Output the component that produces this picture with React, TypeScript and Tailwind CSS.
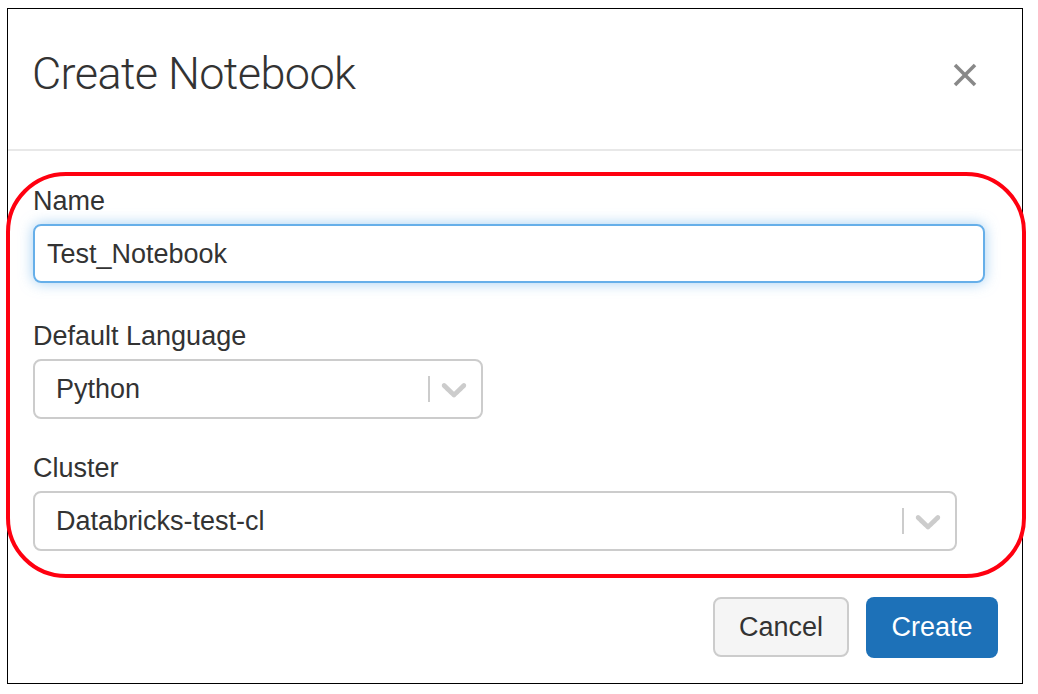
import React from 'react';

function Chevron() {
  return (
    <svg viewBox="0 0 20 20" className="w-[42px] h-[42px]" fill="#cccccc">
      <path d="M4.516 7.548c0.436-0.446 1.043-0.481 1.576 0l3.908 3.747 3.908-3.747c0.533-0.481 1.141-0.446 1.574 0 0.436 0.445 0.408 1.197 0 1.615-0.406 0.418-4.695 4.502-4.695 4.502-0.217 0.223-0.502 0.335-0.787 0.335s-0.57-0.112-0.789-0.335c0 0-4.287-4.084-4.695-4.502s-0.436-1.17 0-1.615z" />
    </svg>
  );
}

function SelectBox({ value, width }: { value: string; width: string }) {
  return (
    <div
      className={`${width} h-[60px] flex items-center border-2 border-[#cccccc] rounded-[8px] bg-white pl-[21px] pr-[6px]`}
    >
      <span className="flex-1 text-[27px] leading-[30px] text-[#333333]">{value}</span>
      <span className="w-[2px] h-[26px] bg-[#cccccc] mr-[3px]" />
      <Chevron />
    </div>
  );
}

export default function App() {
  return (
    <div
      className="relative w-[1038px] h-[694px] bg-white pt-[8px] pl-[7px]"
      style={{ fontFamily: '"Liberation Sans", Arial, sans-serif' }}
    >
      {/* Modal */}
      <div className="w-[1016px] h-[676px] border border-black flex flex-col bg-white">
        {/* Header */}
        <div className="h-[142px] flex justify-between items-start border-b-2 border-[#e8e8e8] pl-[24px] pr-[45px] pt-[37px]">
          <h1
            className="text-[45px] leading-[56px] font-light text-[#333333] tracking-[-0.6px]"
            style={{ fontFamily: 'Roboto, "Liberation Sans", sans-serif' }}
          >
            Create Notebook
          </h1>
          <svg viewBox="0 0 24 24" className="w-[24px] h-[24px] mt-[17px]" stroke="#888888" strokeWidth="3.5">
            <line x1="2" y1="2" x2="22" y2="22" />
            <line x1="22" y1="2" x2="2" y2="22" />
          </svg>
        </div>

        {/* Body */}
        <div className="flex flex-col pl-[25px] pt-[35px]">
          <label className="text-[27px] leading-[30px] text-[#333333] mb-[8px]">Name</label>
          <div className="w-[952px] h-[59px] flex items-center border-2 border-[#66afe9] rounded-[8px] pl-[12px] shadow-[0_0_14px_rgba(102,175,233,0.6)]">
            <span className="text-[27px] leading-[30px] text-[#333333]">Test_Notebook</span>
          </div>

          <label className="text-[27px] leading-[30px] text-[#333333] mt-[38px] mb-[8px]">Default Language</label>
          <SelectBox value="Python" width="w-[450px]" />

          <label className="text-[27px] leading-[30px] text-[#333333] mt-[34px] mb-[8px]">Cluster</label>
          <SelectBox value="Databricks-test-cl" width="w-[924px]" />
        </div>

        {/* Footer */}
        <div className="flex justify-end gap-[17px] pr-[24px] mt-[46px]">
          <button className="w-[136px] h-[60px] bg-[#f5f5f5] border-2 border-[#cccccc] rounded-[8px] text-[27px] text-[#333333]">
            Cancel
          </button>
          <button className="w-[132px] h-[61px] bg-[#1d71b8] rounded-[8px] text-[27px] text-white">
            Create
          </button>
        </div>
      </div>

      {/* Red highlight annotation */}
      <div className="absolute left-[6px] top-[172px] w-[1020px] h-[406px] border-[4px] border-[#ff0010] rounded-[60px] pointer-events-none" />
    </div>
  );
}
